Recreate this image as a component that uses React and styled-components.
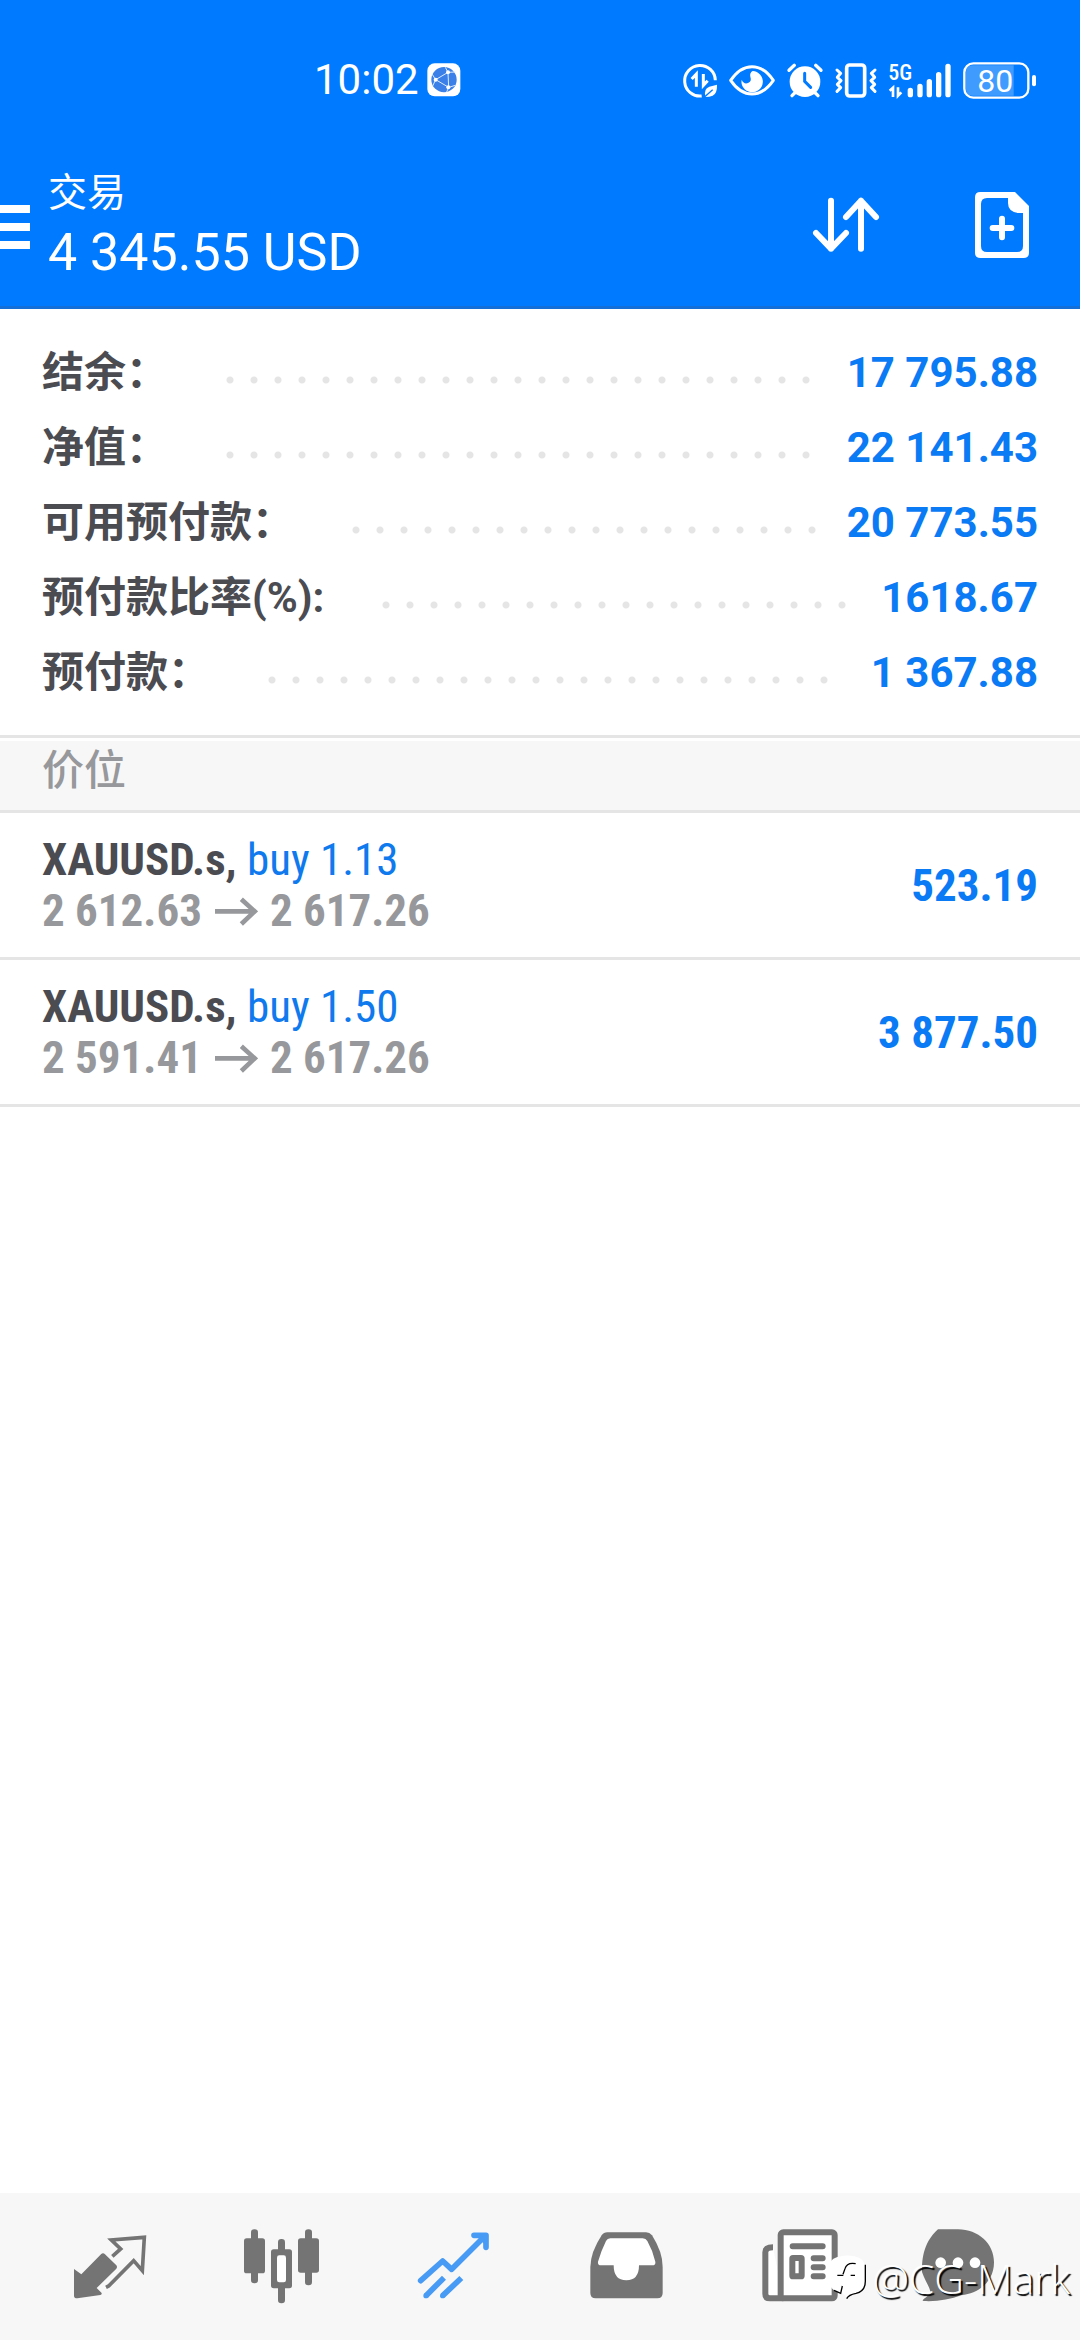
import React, { useState } from "react";
import styled, { createGlobalStyle } from "styled-components";

const BLUE = "#007aff";
const ICON_GREY = "#747474";
const LINE = "#e5e5e5";

const GlobalStyle = createGlobalStyle`
  * {
    box-sizing: border-box;
  }

  body {
    margin: 0;
    background-color: #fff;
    font-family: Roboto, "Noto Sans CJK SC", sans-serif;
  }

  h1, h2, p, dl, dt, dd, ul {
    margin: 0;
    padding: 0;
    font-weight: inherit;
  }
`;

const Page = styled.div`
  position: relative;
  display: flex;
  flex-direction: column;
  min-height: 100vh;
`;

const Header = styled.header`
  background-color: ${BLUE};
  border-bottom: 3px solid #1470d8;
  color: #fff;
`;

const StatusBar = styled.div`
  display: flex;
  align-items: center;
  justify-content: space-between;
  height: 160px;
  padding: 0 42px 0 314px;
`;

const StatusGroup = styled.div`
  display: flex;
  align-items: center;
  gap: 8px;
`;

const Clock = styled.span`
  font-size: 42px;
  line-height: 48px;
`;

const Toolbar = styled.div`
  display: flex;
  align-items: center;
  height: 146px;
  padding: 0 24px 12px 0;
`;

const IconButton = styled.button`
  display: flex;
  align-items: center;
  justify-content: center;
  width: ${(props) => props.$width}px;
  height: 108px;
  padding: 0;
  border: none;
  background: none;
  color: inherit;
`;

const Titles = styled.div`
  flex: 1;
  padding-left: 18px;
`;

const PageTitle = styled.h1`
  font-size: 39px;
  font-weight: 400;
  line-height: 52px;
`;

const Profit = styled.p`
  font-size: 52px;
  line-height: 68px;
`;

const ToolbarActions = styled.div`
  display: flex;
  gap: 48px;
`;

const Summary = styled.dl`
  padding: 26px 42px 25px;
  border-bottom: 3px solid ${LINE};
`;

const SummaryRow = styled.div`
  display: flex;
  align-items: center;
  height: 75px;
  font-size: 42px;
  line-height: 75px;
`;

const SummaryLabel = styled.dt`
  color: #4b4b52;
  font-weight: 700;
`;

const Leader = styled.div`
  flex: 1;
  margin: 14px 10px 0 58px;
`;

/* only whole dots are kept, whatever width is left between label and value */
const Dots = styled.div`
  width: round(down, 100%, 24px);
  height: 8px;
  background-image: radial-gradient(circle at 4px 4px, ${LINE} 3px, transparent 4px);
  background-size: 24px 8px;
`;

const SummaryValue = styled.dd`
  color: #0a7af5;
  font-weight: 700;
`;

const SectionTitle = styled.h2`
  height: 72px;
  margin-top: 3px;
  padding: 0 42px;
  border-bottom: 3px solid ${LINE};
  background-color: #f7f7f7;
  color: #97989b;
  font-size: 42px;
  font-weight: 500;
  line-height: 60px;
`;

const PositionList = styled.ul`
  flex: 1;
  list-style: none;
`;

const Position = styled.li`
  display: flex;
  align-items: center;
  justify-content: space-between;
  height: 147px;
  padding: 0 42px;
  border-bottom: 3px solid ${LINE};
  font-family: "Roboto Condensed", "Liberation Sans Narrow", Roboto, sans-serif;
  font-size: 45px;
  font-weight: 700;
  line-height: 51px;
`;

const Symbol = styled.p`
  color: #4b4b52;
`;

const Side = styled.span`
  color: #0f79ee;
  font-weight: 400;
`;

const Prices = styled.p`
  display: flex;
  align-items: center;
  gap: 12px;
  color: #97989b;
`;

const PositionProfit = styled.span`
  color: #0a7af5;
`;

const Nav = styled.nav`
  display: flex;
  align-items: center;
  height: 147px;
  padding: 0 24px;
  background-color: #f7f7f7;
`;

const NavButton = styled.button`
  display: flex;
  flex: 1;
  justify-content: center;
  padding: 0;
  border: none;
  background: none;
  color: ${(props) => (props.$active ? "#489bf5" : ICON_GREY)};
`;

const Watermark = styled.div`
  position: absolute;
  right: 10px;
  bottom: 35px;
  display: flex;
  align-items: center;
  gap: 4px;
  color: #fff;
  font-family: "Open Sans", sans-serif;
  font-size: 41px;
  font-weight: 300;
  line-height: 54px;
  text-shadow: 2px 2px 1px #000;
  pointer-events: none;
`;

const Icon = ({ size = 96, width = size, height = size, box, children }) => (
  <svg
    width={width}
    height={height}
    viewBox={box}
    fill="none"
    stroke="none"
    aria-hidden="true">
    {children}
  </svg>
);

const BrowserBadge = () => (
  <Icon width={34} height={34} box="407 71 102 102">
    <rect x="408" y="72" width="99" height="99" rx="22" fill="#fff" />
    <circle cx="458" cy="121" r="38" fill="#3a80e8" />
    <g stroke="#dcecff" strokeWidth="3">
      <path d="M433 121 470 99 472 144ZM433 121 422 104M470 99 462 84M470 99 492 98M472 144 492 138M472 144 466 158M433 121 424 140" />
    </g>
    <g fill="#fff">
      <circle cx="433" cy="121" r="6" />
      <circle cx="470" cy="99" r="6" />
      <circle cx="471" cy="144" r="6" />
    </g>
  </Icon>
);

const DataSaverIcon = () => (
  <Icon width={38} height={40} box="36 60 114 120">
    <path
      d="M95 168A46 46 0 1 1 136 121"
      stroke="#fff"
      strokeWidth="9"
    />
    <path d="M65 117 79 102V140M100 102V136L113 122" stroke="#fff" strokeWidth="9" />
    <path d="M106 171Q100 146 118 140L141 134Q142 160 128 167 119 171 106 171Z" fill="#fff" />
    <path d="M100 174 128 149" stroke={BLUE} strokeWidth="4" />
  </Icon>
);

const EyeIcon = () => (
  <Icon width={50} height={40} box="174 60 150 120">
    <path
      d="M182 121Q210 80 246 80 282 80 310 121 282 162 246 162 210 162 182 121Z"
      stroke="#fff"
      strokeWidth="9"
      strokeLinejoin="round"
    />
    <path
      d="M248 93A32 32 0 1 1 215 119Q222 134 234 129 246 124 241 110 238 99 248 93Z"
      fill="#fff"
    />
  </Icon>
);

const AlarmIcon = () => (
  <Icon width={40} height={40} box="348 60 120 120">
    <circle cx="405" cy="125" r="46" fill="#fff" />
    <g stroke="#fff" strokeWidth="10" strokeLinecap="round">
      <path d="M357 91 373 76M437 76 453 91M377 156 366 167M433 156 444 167" />
    </g>
    <path d="M404 100V124L422 142" stroke={BLUE} strokeWidth="9" strokeLinecap="round" />
  </Icon>
);

const VibrateIcon = () => (
  <Icon width={46} height={40} box="492 60 138 120">
    <g stroke="#fff" strokeWidth="9" strokeLinecap="round" strokeLinejoin="round">
      <rect x="530" y="75" width="54" height="93" rx="9" strokeWidth="11" />
      <path d="M501 90 512 100 502 112 513 122 502 133 512 143 501 154" />
      <path d="M615 90 604 100 614 112 603 122 614 133 604 143 615 154" />
    </g>
  </Icon>
);

const SignalIcon = () => (
  <Icon width={66} height={40} box="654 60 198 120">
    <text
      x="655"
      y="121"
      fontSize="66"
      fontFamily="Roboto Condensed"
      fontWeight="500"
      fill="#fff">
      5G
    </text>
    <g stroke="#fff" strokeWidth="16" strokeLinecap="round">
      <path d="M721 151V164M750 139V164M778 125V164M806 104V164M834 79V164" />
    </g>
    <path d="M659 152 669 143V171M684 142V167L694 157" stroke="#fff" strokeWidth="8" />
  </Icon>
);

const BatteryIcon = () => (
  <Icon width={76} height={40} box="876 60 228 120">
    <path d="M908 76H1031V167H908Q888 167 888 147V96Q888 76 908 76Z" fill="#fff" opacity="0.25" />
    <rect x="883" y="70" width="192" height="103" rx="27" stroke="#fff" strokeWidth="7" />
    <rect x="1086" y="105" width="12" height="34" rx="6" fill="#fff" />
    <text x="922" y="156" fontSize="96" fontFamily="Roboto" fontWeight="400" fill="#fff">
      80
    </text>
  </Icon>
);

const MenuIcon = () => (
  <Icon width={30} height={44} box="0 0 30 44">
    <path d="M0 4H30M0 22H30M0 40H30" stroke="currentColor" strokeWidth="8" />
  </Icon>
);

const SortIcon = () => (
  <Icon size={72} box="150 93 216 216">
    <g stroke="currentColor" strokeWidth="18" strokeLinecap="round" strokeLinejoin="round">
      <path d="M213 122V266M168 219 213 266 258 219" />
      <path d="M303 266V122M258 171 303 122 348 171" />
    </g>
  </Icon>
);

const NewOrderIcon = () => (
  <Icon size={72} box="618 93 216 216">
    <path
      fillRule="evenodd"
      fill="currentColor"
      d="M661 96H765L807 138V278Q807 294 791 294H661Q645 294 645 278V112Q645 96 661 96ZM681 114Q663 114 663 132V258Q663 276 681 276H771Q789 276 789 258V159H774Q744 155 744 129V114Z"
    />
    <path d="M726 176V232M698 204H754" stroke="currentColor" strokeWidth="18" strokeLinecap="round" />
  </Icon>
);

const PriceArrow = () => (
  <Icon width={44} height={30} box="642 522 132 90">
    <path d="M645 568H764M724 532 764 568 724 606" stroke="currentColor" strokeWidth="14" />
  </Icon>
);

const QuotesIcon = () => (
  <Icon box="186 146 288 288">
    <path
      fill="currentColor"
      d="M222 296 244 312 303 252Q309 246 315 252L349 285Q353 290 349 295L290 353 305 368Q306 373 301 374L232 384Q222 384 222 376Z"
    />
    <path
      d="M337 258 362 236 334 209 433 201 427 301 401 271 326 347 318 351"
      stroke="currentColor"
      strokeWidth="11"
    />
  </Icon>
);

const ChartsIcon = () => (
  <Icon box="702 146 288 288">
    <g fill="currentColor">
      <rect x="732" y="204" width="63" height="105" rx="8" />
      <rect x="753" y="177" width="21" height="162" rx="10" />
      <rect x="894" y="204" width="63" height="103" rx="8" />
      <rect x="915" y="177" width="21" height="168" rx="10" />
      <rect x="813" y="237" width="63" height="117" rx="8" />
      <rect x="834" y="206" width="21" height="193" rx="10" />
    </g>
    <rect x="831" y="255" width="27" height="81" rx="7" fill="#fff" />
  </Icon>
);

const TradeIcon = () => (
  <Icon box="138 146 288 288">
    <g stroke="currentColor" strokeWidth="17" strokeLinejoin="round">
      <path d="M182 331 248 272 275 297 372 200" strokeLinecap="round" />
      <path d="M342 195H378V231" strokeLinecap="round" />
      <path d="M198 376 252 322M248 376 304 323" />
    </g>
    <path d="M352 200H376V224Z" fill="currentColor" />
    <circle cx="198" cy="376" r="8" fill="currentColor" />
    <circle cx="248" cy="376" r="8" fill="currentColor" />
  </Icon>
);

const HistoryIcon = () => (
  <Icon box="654 146 288 288">
    <path
      fill="currentColor"
      d="M725 195Q731 186 742 186H858Q869 186 876 195 908 245 908 290V368Q908 384 892 384H707Q691 384 691 368V290Q692 245 725 195Z"
    />
    <path
      fill="#fff"
      d="M738 212Q742 204 751 204H848Q858 204 862 212 878 240 886 274 888 285 876 285H837Q837 330 799 330 761 330 761 285H724Q712 285 714 274 724 240 738 212Z"
    />
  </Icon>
);

const NewsIcon = () => (
  <Icon box="90 146 288 288">
    <g stroke="currentColor" strokeWidth="18">
      <path d="M159 231Q136 231 136 246V370Q136 384 150 384H190" fill="#fff" />
      <rect x="182" y="186" width="162" height="198" rx="8" fill="#fff" />
      <path d="M218 228H308M281 264H308M281 291H308M281 318H308" strokeLinecap="round" />
      <rect x="217" y="263" width="28" height="55" rx="2" />
    </g>
  </Icon>
);

const ChatIcon = () => (
  <Icon box="606 146 288 288">
    <path
      fill="currentColor"
      d="M714 177C775 177 822 220 822 276 822 335 775 370 725 374 690 388 650 394 611 392 603 391 611 386 632 370 631 351 615 332 606 305 606 276 606 220 654 177 714 177Z"
    />
    <g fill="#fff">
      <circle cx="662" cy="277" r="16" />
      <circle cx="714" cy="277" r="16" />
      <circle cx="765" cy="277" r="16" />
    </g>
  </Icon>
);

const WatermarkLogo = () => (
  <Icon width={40} height={48} box="336 268 120 144">
    <path
      fill="#fff"
      d="M375 275Q394 270 415 275 447 281 447 308V352Q447 382 418 385 398 388 390 400 388 388 372 384 338 378 338 340V310Q338 281 375 275Z"
    />
    <g stroke="#000" strokeWidth="4">
      <path d="M448 300V350Q448 380 420 386 398 390 392 402" />
      <path d="M419 297Q393 292 387 312L381 329M364 332H382M404 332H417" />
      <path d="M354 377 374 386 379 364" />
    </g>
  </Icon>
);

const accountRows = [
  { label: "结余：", value: "17 795.88" },
  { label: "净值：", value: "22 141.43" },
  { label: "可用预付款：", value: "20 773.55" },
  { label: "预付款比率(%):", value: "1618.67" },
  { label: "预付款：", value: "1 367.88" },
];

const positions = [
  {
    id: 1,
    symbol: "XAUUSD.s",
    side: "buy 1.13",
    open: "2 612.63",
    current: "2 617.26",
    profit: "523.19",
  },
  {
    id: 2,
    symbol: "XAUUSD.s",
    side: "buy 1.50",
    open: "2 591.41",
    current: "2 617.26",
    profit: "3 877.50",
  },
];

const tabs = [
  { id: "quotes", label: "行情", TabIcon: QuotesIcon },
  { id: "charts", label: "图表", TabIcon: ChartsIcon },
  { id: "trade", label: "交易", TabIcon: TradeIcon },
  { id: "history", label: "历史", TabIcon: HistoryIcon },
  { id: "news", label: "新闻", TabIcon: NewsIcon },
  { id: "chat", label: "消息", TabIcon: ChatIcon },
];

const App = () => {
  const [activeTab, setActiveTab] = useState("trade");

  return (
    <Page>
      <GlobalStyle />
      <Header>
        <StatusBar>
          <StatusGroup>
            <Clock>10:02</Clock>
            <BrowserBadge />
          </StatusGroup>
          <StatusGroup>
            <DataSaverIcon />
            <EyeIcon />
            <AlarmIcon />
            <VibrateIcon />
            <SignalIcon />
            <BatteryIcon />
          </StatusGroup>
        </StatusBar>
        <Toolbar>
          <IconButton type="button" $width={30} aria-label="菜单">
            <MenuIcon />
          </IconButton>
          <Titles>
            <PageTitle>交易</PageTitle>
            <Profit>4 345.55 USD</Profit>
          </Titles>
          <ToolbarActions>
            <IconButton type="button" $width={108} aria-label="排序">
              <SortIcon />
            </IconButton>
            <IconButton type="button" $width={108} aria-label="新订单">
              <NewOrderIcon />
            </IconButton>
          </ToolbarActions>
        </Toolbar>
      </Header>
      <Summary>
        {accountRows.map(({ label, value }) => (
          <SummaryRow key={label}>
            <SummaryLabel>{label}</SummaryLabel>
            <Leader>
              <Dots />
            </Leader>
            <SummaryValue>{value}</SummaryValue>
          </SummaryRow>
        ))}
      </Summary>
      <SectionTitle>价位</SectionTitle>
      <PositionList>
        {positions.map((position) => (
          <Position key={position.id}>
            <div>
              <Symbol>
                {position.symbol}, <Side>{position.side}</Side>
              </Symbol>
              <Prices>
                <span>{position.open}</span>
                <PriceArrow />
                <span>{position.current}</span>
              </Prices>
            </div>
            <PositionProfit>{position.profit}</PositionProfit>
          </Position>
        ))}
      </PositionList>
      <Nav>
        {tabs.map(({ id, label, TabIcon }) => (
          <NavButton
            key={id}
            type="button"
            aria-label={label}
            $active={id === activeTab}
            onClick={() => setActiveTab(id)}>
            <TabIcon />
          </NavButton>
        ))}
      </Nav>
      <Watermark>
        <WatermarkLogo />
        <span>@CG-Mark</span>
      </Watermark>
    </Page>
  );
};

export default App;
